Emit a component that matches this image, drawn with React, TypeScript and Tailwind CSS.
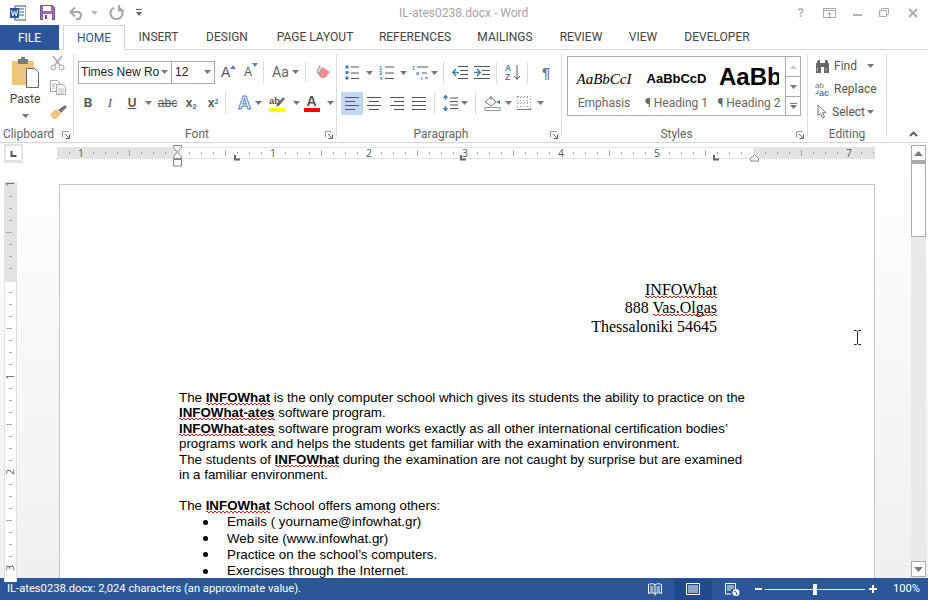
import React from "react";

const UI = "font-['Roboto','Open_Sans',sans-serif]";

function Caret({ className = "" }: { className?: string }) {
  return (
    <svg width="7" height="4" viewBox="0 0 7 4" className={"shrink-0 " + className}>
      <path d="M0 0h7L3.5 4z" fill="#777" />
    </svg>
  );
}

function Launcher() {
  return (
    <svg width="8" height="8" viewBox="0 0 8 8" className="shrink-0">
      <path d="M.5 6.500V.5H6.500" fill="none" stroke="#999" />
      <path d="M3 3l4 4M7.500 3.500V7.500H3.500" fill="none" stroke="#666" />
    </svg>
  );
}

function Sep({ h = 24, x = 0 }: { h?: number; x?: number }) {
  return <div className="w-px shrink-0 bg-[#dcdcdc]" style={{ height: h, marginLeft: x, marginRight: x }} />;
}

function Lines({ kind }: { kind: "l" | "c" | "r" | "j" }) {
  const rows: [number, number][] =
    kind === "l" ? [[0, 14], [0, 10], [0, 14], [0, 10]]
    : kind === "c" ? [[0, 14], [2, 12], [0, 14], [2, 12]]
    : kind === "r" ? [[0, 14], [4, 14], [0, 14], [4, 14]]
    : [[0, 14], [0, 14], [0, 14], [0, 14]];
  return (
    <svg width="14" height="13" viewBox="0 0 14 13" shapeRendering="crispEdges">
      {rows.map(([a, b], i) => (
        <rect key={i} x={a} y={i * 4} width={b - a} height="1" fill="#555" />
      ))}
    </svg>
  );
}

function GroupLabel({ children, launcher = true }: { children: React.ReactNode; launcher?: boolean }) {
  return (
    <div className={"relative mt-auto flex h-[6px] items-center justify-center text-[12px] text-[#666] " + (launcher ? "pr-[16px]" : "")}>
      <span className="whitespace-nowrap">{children}</span>
      {launcher && (
        <span className="absolute right-[3px] top-[0px] flex">
          <Launcher />
        </span>
      )}
    </div>
  );
}

function Tab({ w, children }: { w: number; children: React.ReactNode }) {
  return (
    <div className="flex h-full items-center justify-center text-[12px] text-[#444]" style={{ width: w }}>
      {children}
    </div>
  );
}

function Ruler() {
  const ticks: number[] = [];
  for (let x = 69; x < 875; x += 12) ticks.push(x);
  const nums: [number, string][] = [[81, "1"], [273, "1"], [369, "2"], [465, "3"], [561, "4"], [657, "5"], [849, "7"]];
  const tabs = [237, 463, 716];
  return (
    <svg width="928" height="24" viewBox="0 143 928 24" className="block">
      <rect x="4" y="144" width="19" height="19" fill="#e4e4e4" />
      <rect x="6" y="146" width="15" height="14" fill="#fff" />
      <path d="M11.5 151v5h5" fill="none" stroke="#555" strokeWidth="2" />
      <rect x="57" y="147" width="818" height="12" fill="#e3e3e3" />
      <rect x="177" y="148" width="576" height="10" fill="#fff" />
      {ticks.map((x) => {
        const rel = x - 177;
        if (((rel % 96) + 96) % 96 === 0) return null;
        const half = ((rel % 48) + 48) % 48 === 0;
        return <rect key={x} x={x} y={half ? 150 : 152} width="1" height={half ? 6 : 2} fill="#a8a8a8" />;
      })}
      {nums.map(([x, t]) => (
        <text key={x + t} x={x} y="157" textAnchor="middle" fontSize="10.5" fill="#555" fontFamily="'Open Sans',sans-serif">
          {t}
        </text>
      ))}
      {tabs.map((x) => (
        <path key={x} d={`M${x - 2} 155v4.5h5`} fill="none" stroke="#666" strokeWidth="2" />
      ))}
      <path d="M173.5 145.500h8v2l-4 4.500 4 4.500v2h-8v-2l4-4.500-4-4.500z" fill="#fff" stroke="#888" />
      <rect x="173.500" y="159.500" width="8" height="6.500" fill="#fff" stroke="#888" />
      <path d="M750.500 161v-2.500l4-4 4 4v2.500z" fill="#fff" stroke="#888" />
    </svg>
  );
}

function VRuler() {
  const items = [];
  for (let i = 0; i < 33; i++) {
    const y = 12 * i + 2;
    const mod = ((y - 2) % 96 + 96) % 96;
    if (mod === 0) continue;
    const half = mod === 48;
    items.push(<rect key={i} x={half ? 6 : 9} y={y} width={half ? 6 : 3} height="1" fill="#a8a8a8" />);
  }
  return (
    <svg width="18" height="400" viewBox="0 0 18 400" className="block shrink-0">
      <rect x="4" y="0" width="13" height="400" fill="#fff" />
      <rect x="4" y="0" width="1" height="400" fill="#e0e0e0" />
      <rect x="16" y="0" width="1" height="400" fill="#e0e0e0" />
      <rect x="4" y="0" width="13" height="100" fill="#e3e3e3" />
      {items}
      {[[2, "1"], [195, "1"], [290, "2"], [386, "3"]].map(([y, t]) => (
        <text key={String(y)} x="0" y="0" transform={`translate(14 ${y}) rotate(-90)`} textAnchor="middle" fontSize="10" fill="#555" fontFamily="'Open Sans',sans-serif">
          {t}
        </text>
      ))}
    </svg>
  );
}

function Sq({ children }: { children: React.ReactNode }) {
  return (
    <span className="bg-[length:4px_1px] bg-repeat-x [background-image:linear-gradient(90deg,#f01018_50%,transparent_50%),linear-gradient(90deg,transparent_50%,#f01018_50%)] [background-position:left_0_bottom_1px,left_0_bottom_0px]">
      {children}
    </span>
  );
}

function ScrollBtn({ down }: { down?: boolean }) {
  return (
    <div className="flex h-[16px] w-[15px] items-center justify-center border border-[#ababab] bg-white">
      <svg width="9" height="5" viewBox="0 0 9 5">
        <path d={down ? "M0 0h9L4.500 5z" : "M0 5h9L4.500 0z"} fill="#777" />
      </svg>
    </div>
  );
}

export default function App() {
  return (
    <div className={"flex h-[600px] w-[928px] flex-col overflow-hidden bg-white " + UI}>
      {/* Title bar */}
      <div className="flex h-[25px] shrink-0 items-center">
        <svg width="16" height="16" viewBox="0 0 16 16" className="ml-[10px]">
          <rect x="5" y="1" width="11" height="14" fill="#fff" stroke="#2b579a" />
          <path d="M9 4h5M9 7h5M9 10h5" stroke="#2b579a" />
          <rect x="0" y="3" width="9" height="10" fill="#2b579a" />
          <path d="M1.500 5l1.200 6 1.800-5 1.800 5 1.200-6" fill="none" stroke="#fff" />
        </svg>
        <svg width="15" height="15" viewBox="0 0 15 15" className="ml-[14px]">
          <path d="M.5.500h12l2 2v12H.5z" fill="#9a6bb0" stroke="#7c4f9a" />
          <rect x="3" y="1" width="8" height="5" fill="#fff" />
          <rect x="3" y="9" width="9" height="6" fill="#fff" />
          <rect x="5" y="10" width="2" height="4" fill="#7c4f9a" />
        </svg>
        <svg width="15" height="14" viewBox="0 0 15 14" className="ml-[14px]">
          <path d="M2 6h8a4 4 0 0 1 0 7H7" fill="none" stroke="#a9a9a9" strokeWidth="2.200" />
          <path d="M6 1.500L1.500 6 6 10.500" fill="none" stroke="#a9a9a9" strokeWidth="2.200" />
        </svg>
        <Caret className="ml-[7px] opacity-50" />
        <svg width="15" height="15" viewBox="0 0 15 15" className="ml-[11px]">
          <path d="M5 2.700a6 6 0 1 0 5 0" fill="none" stroke="#a9a9a9" strokeWidth="2.200" />
          <path d="M10 0v5.500h5" fill="none" stroke="#a9a9a9" strokeWidth="2" />
        </svg>
        <svg width="6" height="7" viewBox="0 0 6 7" className="ml-[12px]">
          <path d="M0 0h6v1H0zM0 3h6L3 7z" fill="#666" />
        </svg>
        <div className="ml-[257px] w-[128px] whitespace-nowrap text-center text-[12px] text-[#a6a6a6]">IL-ates0238.docx - Word</div>
        <div className="ml-auto flex items-center">
          <span className="mr-[19px] text-[13px] font-bold text-[#b5b5b5]">?</span>
          <svg width="13" height="10" viewBox="0 0 13 10" className="mr-[17px]">
            <path d="M.5.500h12v9H.5zM.5 2.500h12" fill="none" stroke="#ababab" />
            <path d="M6.500 9V4.500M4.500 6.500l2-2 2 2" fill="none" stroke="#ababab" />
          </svg>
          <div className="mr-[17px] mt-[4px] h-[2px] w-[9px] bg-[#b5b5b5]" />
          <svg width="10" height="9" viewBox="0 0 10 9" className="mr-[19px]">
            <path d="M.5 2.500h7v6h-7zM2.500 2.500V.5h7v6H8" fill="none" stroke="#ababab" />
          </svg>
          <svg width="10" height="10" viewBox="0 0 10 10" className="mr-[10px]">
            <path d="M1 1l8 8M9 1l-8 8" stroke="#ababab" strokeWidth="1.800" />
          </svg>
        </div>
      </div>

      {/* Tabs */}
      <div className="flex h-[25px] shrink-0 border-b border-[#d5d5d5]">
        <div className="flex h-[25px] w-[59px] items-center justify-center bg-[#2b579a] text-[12px] text-white">FILE</div>
        <div className="ml-[4px] flex h-[25px] w-[62px] items-center justify-center border border-b-0 border-[#d5d5d5] bg-white text-[12px] text-[#2b579a]">HOME</div>
        <Tab w={67}>INSERT</Tab>
        <Tab w={70}>DESIGN</Tab>
        <Tab w={106}>PAGE LAYOUT</Tab>
        <Tab w={94}>REFERENCES</Tab>
        <Tab w={86}>MAILINGS</Tab>
        <Tab w={66}>REVIEW</Tab>
        <Tab w={58}>VIEW</Tab>
        <Tab w={90}>DEVELOPER</Tab>
      </div>

      {/* Ribbon */}
      <div className="flex h-[93px] shrink-0 border-b border-[#d5d5d5] pb-[5px] pt-[4px]">
        {/* Clipboard */}
        <div className="flex w-[74px] shrink-0 flex-col border-r border-[#dcdcdc]">
          <div className="flex">
            <div className="flex w-[50px] flex-col items-center pt-[3px]">
              <svg width="29" height="32" viewBox="0 0 29 32">
                <rect x="1" y="4" width="22" height="24" rx="1" fill="#eec57e" />
                <rect x="7" y="2" width="10" height="5" fill="#7a7a7a" />
                <rect x="10" y="0" width="4" height="3" fill="#7a7a7a" />
                <path d="M15.500 11.500h8l4 4v15h-12z" fill="#fff" stroke="#666" />
              </svg>
              <span className="mt-[2px] text-[12px] leading-[16px] text-[#444]">Paste</span>
              <Caret className="mt-[7px]" />
            </div>
            <div className="flex flex-col gap-[9px] pt-[1px]">
              <svg width="15" height="16" viewBox="0 0 15 16">
                <path d="M3 1l7 9M12 1L5 10" stroke="#a0a0a0" strokeWidth="1.300" fill="none" />
                <circle cx="3.500" cy="12.500" r="2.500" fill="none" stroke="#a0a0a0" />
                <circle cx="11.500" cy="12.500" r="2.500" fill="none" stroke="#a0a0a0" />
              </svg>
              <svg width="16" height="15" viewBox="0 0 16 15">
                <path d="M.5.500h7l2 2v9h-9z" fill="#fff" stroke="#a8a8a8" />
                <path d="M6.500 4.500h6l3 3v7h-9z" fill="#fff" stroke="#a8a8a8" />
                <path d="M2 4h4M2 6h3M2 8h3M8 9h6M8 11h6M8 13h6" stroke="#b8b8b8" />
              </svg>
              <svg width="17" height="15" viewBox="0 0 17 15">
                <path d="M0 10l6-5 5 5-5 5H3z" fill="#eec57e" />
                <path d="M8 6l7-5 2 2-6 6z" fill="#777" />
              </svg>
            </div>
          </div>
          <GroupLabel>Clipboard</GroupLabel>
        </div>

        {/* Font */}
        <div className="flex w-[263px] shrink-0 flex-col border-r border-[#dcdcdc]">
          <div className="flex h-[31px] items-center pl-[4px] pt-[5px]">
            <div className="flex h-[23px] w-[94px] items-center border border-[#ababab] pl-[2px] font-['Liberation_Sans',sans-serif] text-[12px] text-[#222]">
              <span className="w-[78px] whitespace-nowrap">Times New Ro</span>
              <Caret className="ml-[2px]" />
            </div>
            <div className="-ml-px flex h-[23px] w-[44px] items-center border border-[#ababab] pl-[3px] font-['Liberation_Sans',sans-serif] text-[12px] text-[#222]">
              <span className="w-[29px]">12</span>
              <Caret />
            </div>
            <div className="relative ml-[6px] flex w-[20px] items-end font-['Liberation_Sans',sans-serif] text-[14px] leading-none text-[#555]">
              A
              <svg width="6" height="4" viewBox="0 0 6 4" className="absolute left-[9px] top-[0px]"><path d="M0 4h6L3 0z" fill="#4e86c0" /></svg>
            </div>
            <div className="relative ml-[3px] flex w-[19px] items-end font-['Liberation_Sans',sans-serif] text-[12px] leading-none text-[#555]">
              A
              <svg width="6" height="4" viewBox="0 0 6 4" className="absolute left-[8px] top-[-3px]"><path d="M0 0h6L3 4z" fill="#4e86c0" /></svg>
            </div>
            <Sep h={22} x={0} />
            <span className="ml-[8px] w-[16px] text-[14px] text-[#666]">Aa</span>
            <Caret className="ml-[4px]" />
            <div className="ml-[6px]"><Sep h={22} x={0} /></div>
            <svg width="16" height="16" viewBox="0 0 16 16" className="ml-[9px]">
              <path d="M2 9l6-6 7 5-5 6H6z" fill="#ee8f97" />
              <path d="M5 1l-3 7 3 1 2-5" fill="#ddd" stroke="#999" />
            </svg>
          </div>
          <div className="mt-[6px] flex h-[24px] items-center pl-[3px] text-[#555]">
            <span className="w-[22px] text-center font-['Liberation_Sans',sans-serif] text-[12px] font-bold">B</span>
            <span className="w-[22px] text-center font-['Liberation_Serif',serif] text-[13px] italic">I</span>
            <span className="w-[22px] text-center font-['Liberation_Sans',sans-serif] text-[12px] font-bold underline">U</span>
            <Caret className="ml-[2px]" />
            <span className="ml-[3px] w-[25px] text-center font-['Liberation_Sans',sans-serif] text-[12px] line-through">abc</span>
            <span className="ml-[1px] w-[20px] text-center font-['Liberation_Sans',sans-serif] text-[12px] font-bold">x<sub className="text-[7px] text-[#2b78c2]">2</sub></span>
            <span className="w-[24px] text-center font-['Liberation_Sans',sans-serif] text-[12px] font-bold">x<sup className="text-[7px] text-[#2b78c2]">2</sup></span>
            <Sep h={22} x={0} />
            <span className="ml-[12px] font-['Liberation_Sans',sans-serif] text-[18px] font-bold leading-none text-white [-webkit-text-stroke:1px_#4e86c0]">A</span>
            <Caret className="ml-[4px]" />
            <div className="ml-[7px] flex w-[17px] flex-col items-start">
              <svg width="17" height="12" viewBox="0 0 17 12">
                <text x="0" y="9" fontSize="9.500" fontWeight="700" fill="#555" fontFamily="Liberation Sans">ab</text>
                <path d="M8 11l7-8" stroke="#666" strokeWidth="2.500" />
              </svg>
              <div className="mt-[1px] h-[4px] w-[16px] bg-[#ffff00]" />
            </div>
            <Caret className="ml-[7px]" />
            <div className="ml-[3px] flex w-[17px] flex-col items-center">
              <span className="font-['Liberation_Sans',sans-serif] text-[14px] font-bold leading-[13px]">A</span>
              <div className="h-[4px] w-[16px] bg-[#ff0000]" />
            </div>
            <Caret className="ml-[7px]" />
          </div>
          <GroupLabel>Font</GroupLabel>
        </div>

        {/* Paragraph */}
        <div className="flex w-[225px] shrink-0 flex-col border-r border-[#dcdcdc]">
          <div className="flex h-[31px] items-center pl-[8px] pt-[6px]">
            <svg width="14" height="15" viewBox="0 0 14 15">
              {[2, 7.5, 13].map((y) => <circle key={y} cx="2" cy={y} r="1.700" fill="#3f7fbd" />)}
              <path d="M6 2h8M6 8h8M6 13.500h8" stroke="#555" />
            </svg>
            <Caret className="ml-[7px]" />
            <svg width="15" height="15" viewBox="0 0 15 15" className="ml-[6px]">
              {[0, 5.500, 11].map((y, i) => <text key={y} x="0" y={y + 4.500} fontSize="6" fontWeight="700" fill="#3f7fbd" fontFamily="Liberation Sans">{i + 1}</text>)}
              <path d="M6 2h9M6 8h9M6 13.500h9" stroke="#555" />
            </svg>
            <Caret className="ml-[6px]" />
            <svg width="16" height="15" viewBox="0 0 16 15" className="ml-[5px]">
              <text x="0" y="5" fontSize="5.500" fontWeight="700" fill="#3f7fbd" fontFamily="Liberation Sans">1</text>
              <text x="4" y="10" fontSize="5.500" fontWeight="700" fill="#3f7fbd" fontFamily="Liberation Sans">a</text>
              <text x="9" y="15" fontSize="5.500" fontWeight="700" fill="#3f7fbd" fontFamily="Liberation Sans">i</text>
              <path d="M5 2h11M10 8h5M13 13h3" stroke="#555" />
            </svg>
            <Caret className="ml-[3px]" />
            <Sep h={22} x={5} />
            <svg width="16" height="13" viewBox="0 0 16 13" className="ml-[3px]">
              <path d="M6 .5h10M8 4.500h8M8 8.500h8M6 12.500h10" stroke="#555" />
              <path d="M7 6.500H1M4 3L.8 6.500 4 10" fill="none" stroke="#3f7fbd" strokeWidth="1.500" />
            </svg>
            <svg width="16" height="13" viewBox="0 0 16 13" className="ml-[6px]">
              <path d="M0 .5h16M8 4.500h8M8 8.500h8M0 12.500h16" stroke="#555" />
              <path d="M0 6.500h6M3 3l3.200 3.500L3 10" fill="none" stroke="#3f7fbd" strokeWidth="1.500" />
            </svg>
            <Sep h={22} x={6} />
            <svg width="16" height="17" viewBox="0 0 16 17" className="ml-[2px]">
              <text x="0" y="7" fontSize="8.500" fontWeight="700" fill="#3f7fbd" fontFamily="Liberation Sans">A</text>
              <text x="0" y="16" fontSize="8.500" fontWeight="700" fill="#8a5fa8" fontFamily="Liberation Sans">Z</text>
              <path d="M12 1v14M9 12l3 3.500 3-3.500" fill="none" stroke="#555" />
            </svg>
            <Sep h={22} x={6} />
            <span className="ml-[8px] font-['Liberation_Sans',sans-serif] text-[15px] font-bold leading-none text-[#777]">¶</span>
          </div>
          <div className="mt-[6px] flex h-[24px] items-center pl-[4px]">
            <div className="flex h-[23px] w-[22px] items-center justify-center bg-[#c3d6f2]"><Lines kind="l" /></div>
            <div className="flex w-[22px] items-center justify-center"><Lines kind="c" /></div>
            <div className="flex w-[23px] items-center justify-center"><Lines kind="r" /></div>
            <div className="flex w-[22px] items-center justify-center"><Lines kind="j" /></div>
            <Sep h={22} x={4} />
            <svg width="15" height="16" viewBox="0 0 15 16" className="ml-[4px]">
              <path d="M2.500 5V1M.5 3l2-2.500 2 2.500M2.500 11v4M.5 13l2 2.500 2-2.500" fill="none" stroke="#3f7fbd" strokeWidth="1.300" />
              <path d="M7 3h8M7 6.500h8M7 10h8M7 13.500h8" stroke="#555" />
            </svg>
            <Caret className="ml-[3px]" />
            <Sep h={22} x={7} />
            <svg width="17" height="16" viewBox="0 0 17 16" className="ml-[1px]">
              <path d="M1 7l6-5 5 5-5 4z" fill="#fff" stroke="#777" />
              <path d="M7 1v4" stroke="#777" />
              <path d="M12 7l4-2v4z" fill="#3f7fbd" />
              <rect x="1" y="12.500" width="15" height="3" fill="#fff" stroke="#999" />
            </svg>
            <Caret className="ml-[4px]" />
            <svg width="14" height="14" viewBox="0 0 14 14" className="ml-[5px]" shapeRendering="crispEdges">
              <path d="M.5.500h13v13H.5zM.5 6.500h13M6.500 .5v13M3.500 .5v13M10.500 .5v13" fill="none" stroke="#999" strokeDasharray="1 2" />
              <path d="M0 13.500h14" stroke="#777" />
            </svg>
            <Caret className="ml-[6px]" />
          </div>
          <GroupLabel>Paragraph</GroupLabel>
        </div>

        {/* Styles */}
        <div className="flex w-[246px] shrink-0 flex-col border-r border-[#dcdcdc]">
          <div className="ml-[5px] mt-[2px] flex h-[60px] w-[234px] border border-[#ababab]">
            <div className="flex w-[72px] flex-col items-center">
              <span className="mt-[11px] h-[22px] font-['Liberation_Serif',serif] text-[15px] italic leading-[22px] text-black">AaBbCcI</span>
              <span className="mt-[5px] text-[12px] leading-[16px] text-[#666]">Emphasis</span>
            </div>
            <div className="flex w-[73px] flex-col items-center">
              <span className="mt-[11px] h-[22px] font-['Liberation_Sans',sans-serif] text-[13px] font-bold leading-[22px] text-black">AaBbCcD</span>
              <span className="mt-[5px] whitespace-nowrap text-[12px] leading-[16px] text-[#666]">¶ Heading 1</span>
            </div>
            <div className="flex w-[72px] flex-col items-center">
              <span className="mt-[5px] h-[28px] w-[60px] overflow-hidden whitespace-nowrap font-['Liberation_Sans',sans-serif] text-[24px] font-bold leading-[30px] text-black">AaBb</span>
              <span className="mt-[5px] whitespace-nowrap text-[12px] leading-[16px] text-[#666]">¶ Heading 2</span>
            </div>
            <div className="flex w-[15px] flex-col border-l border-[#ababab]">
              <div className="flex h-[20px] items-center justify-center border-b border-[#ababab]"><svg width="7" height="4" viewBox="0 0 7 4"><path d="M0 4h7L3.500 0z" fill="#ccc" /></svg></div>
              <div className="flex h-[20px] items-center justify-center border-b border-[#ababab]"><Caret /></div>
              <div className="flex flex-1 flex-col items-center justify-center gap-[1px]"><div className="h-px w-[7px] bg-[#777]" /><Caret /></div>
            </div>
          </div>
          <GroupLabel>Styles</GroupLabel>
        </div>

        {/* Editing */}
        <div className="flex w-[79px] shrink-0 flex-col border-r border-[#dcdcdc]">
          <div className="flex h-[23px] items-center pl-[7px] text-[12px] text-[#555]">
            <svg width="15" height="14" viewBox="0 0 15 14">
              <path d="M1 5l2-4h2v3h5V1h2l2 4v9H9V8H6v6H1z" fill="#666" />
              <path d="M2.500 9v3M11 9v3" stroke="#bbb" />
            </svg>
            <span className="ml-[4px] w-[31px]">Find</span>
            <Caret className="ml-[2px]" />
          </div>
          <div className="flex h-[23px] items-center pl-[7px] text-[12px] text-[#555]">
            <svg width="16" height="16" viewBox="0 0 16 16">
              <text x="0" y="7" fontSize="8" fill="#777" fontFamily="Liberation Sans">ab</text>
              <text x="4" y="15" fontSize="9" fontWeight="700" fill="#3f7fbd" fontFamily="Liberation Sans">ac</text>
              <path d="M3 9.500v3H.5" fill="none" stroke="#3f7fbd" />
            </svg>
            <span className="ml-[3px]">Replace</span>
          </div>
          <div className="flex h-[23px] items-center pl-[9px] text-[12px] text-[#555]">
            <svg width="10" height="15" viewBox="0 0 10 15">
              <path d="M1 .8v11l2.500-2.300L5.500 14l2-1-2-4.300H9z" fill="#fff" stroke="#777" />
            </svg>
            <span className="ml-[5px]">Select</span>
            <Caret className="ml-[2px]" />
          </div>
          <GroupLabel launcher={false}>Editing</GroupLabel>
        </div>
        <div className="flex flex-1 items-end justify-end pr-[10px]">
          <svg width="9" height="6" viewBox="0 0 9 6"><path d="M1 5l3.500-3.500L8 5" fill="none" stroke="#555" strokeWidth="1.800" /></svg>
        </div>
      </div>

      {/* Body */}
      <div className="relative flex min-h-0 flex-1 flex-col bg-gradient-to-b from-[#ffffff] to-[#f0f0f0]">
        <Ruler />
        <div className="flex min-h-0 flex-1 pr-[53px] pt-[15px]">
          <VRuler />
          <div className="ml-[41px] mt-[2px] flex-1 self-stretch border-l border-r border-t border-[#c6c6c6] bg-white">
            <div className="pl-[119px] pr-[122px] pt-[96px]">
              <div className="pr-[35px] text-right font-['Liberation_Serif',serif] text-[16px] leading-[18.400px] text-black">
                <div><Sq>INFOWhat</Sq></div>
                <div>888 <Sq>Vas.Olgas</Sq></div>
                <div>Thessaloniki 54645</div>
              </div>
              <div className="mt-[53.700px] font-['Liberation_Sans',sans-serif] text-[13.330px] leading-[15.500px] text-black">
                <p>The <b><Sq>INFOWhat</Sq></b> is the only computer school which gives its students the ability to practice on the <b><Sq>INFOWhat-ates</Sq></b> software program.</p>
                <p><b><Sq>INFOWhat-ates</Sq></b> software program works exactly as all other international certification bodies’ programs work and helps the students get familiar with the examination environment.</p>
                <p>The students of <b><Sq>INFOWhat</Sq></b> during the examination are not caught by surprise but are examined in a familiar environment.</p>
                <p className="mt-[15.500px]">The <b><Sq>INFOWhat</Sq></b> School offers among others:</p>
                <ul className="mt-[0.500px] flex flex-col gap-[0.800px]">
                  {["Emails ( yourname@infowhat.gr)", "Web site (www.infowhat.gr)", "Practice on the school’s computers.", "Exercises through the Internet."].map((t) => (
                    <li key={t} className="flex items-center">
                      <span className="ml-[24px] mr-[19px] size-[5px] rounded-full bg-black" />
                      <span>{t}</span>
                    </li>
                  ))}
                </ul>
              </div>
            </div>
          </div>
        </div>
        {/* Scrollbar */}
        <div className="absolute bottom-[1px] right-[2px] top-[2px] flex w-[15px] flex-col bg-[#e9e9e9]">
          <ScrollBtn />
          <div className="h-[76px] border border-t-[3px] border-[#ababab] bg-white" />
          <div className="mt-auto"><ScrollBtn down /></div>
        </div>
        {/* I-beam pointer */}
        <svg width="7" height="15" viewBox="0 0 7 15" className="absolute left-[854px] top-[187px]">
          <path d="M0 .5h2.500l1 1 1-1H7M3.500 1.500v12M0 14.500h2.500l1-1 1 1H7" fill="none" stroke="#222" />
        </svg>
      </div>

      {/* Status */}
      <div className="flex h-[22px] shrink-0 items-center bg-[#2b579a] text-white">
        <span className="ml-[7px] text-[11.200px]">IL-ates0238.docx: 2,024 characters (an approximate value).</span>
        <svg width="14" height="13" viewBox="0 0 14 13" className="ml-auto">
          <path d="M.5 1.500c2-1 4-1 6.500 0 2.500-1 4.500-1 6.500 0v9c-2-1-4-1-6.500 0-2.500-1-4.500-1-6.500 0zM7 1.500v11" fill="none" stroke="#fff" />
          <path d="M2 4h3.500M2 6h3.500M2 8h3.500M8.500 4H12M8.500 6H12M8.500 8H12" stroke="#fff" />
        </svg>
        <div className="ml-[12px] flex h-[21px] w-[38px] items-center justify-center bg-[#1e4a8c]">
          <svg width="14" height="12" viewBox="0 0 14 12">
            <path d="M.5.500h13v11H.5z" fill="none" stroke="#fff" />
            <path d="M2 3h10M2 5h10M2 7h10M2 9h10" stroke="#fff" />
          </svg>
        </div>
        <svg width="15" height="13" viewBox="0 0 15 13" className="ml-[13px]">
          <path d="M.5.500h10V7M.5.500V11H6" fill="none" stroke="#fff" />
          <path d="M2 3h7M2 5h7M2 7h4" stroke="#fff" />
          <circle cx="11" cy="9.500" r="3.500" fill="#fff" />
          <path d="M9 8l2 1 1 3" stroke="#2b579a" fill="none" />
        </svg>
        <div className="ml-[15px] h-[2px] w-[7px] bg-white" />
        <div className="relative ml-[3px] h-px w-[100px] bg-white">
          <div className="absolute left-[48px] top-[-5px] h-[11px] w-[4px] bg-white" />
        </div>
        <svg width="8" height="8" viewBox="0 0 8 8" className="ml-[4px]">
          <path d="M4 0v8M0 4h8" stroke="#fff" strokeWidth="2" />
        </svg>
        <span className="ml-[16px] mr-[9px] w-[26px] whitespace-nowrap text-[11.200px]">100%</span>
      </div>
    </div>
  );
}
